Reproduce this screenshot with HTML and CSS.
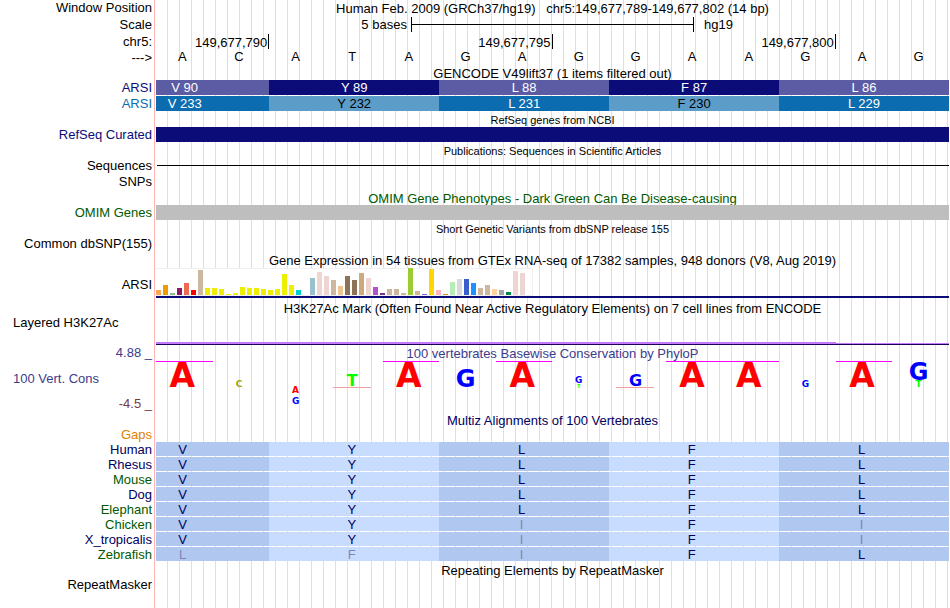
FILE: index.html
```html
<!DOCTYPE html>
<html lang="en">
<head>
    <meta charset="UTF-8">
    <meta name="viewport" content="width=device-width, initial-scale=1.0">
    <title>Human chr5:149,677,789-149,677,802</title>
    <link rel="stylesheet" href="styles.css">
</head>
<body>
<main class="browser">
    <!-- ruler -->
    <section class="ruler">
        <div class="row">
            <div class="label">Window Position</div>
            <h1 class="title">Human Feb. 2009 (GRCh37/hg19) &nbsp; chr5:149,677,789-149,677,802 (14 bp)</h1>
        </div>
        <div class="row tall">
            <div class="label">Scale</div>
            <div class="scale">
                <span class="scale-text">5 bases</span>
                <span class="scale-bar"></span>
                <span class="scale-name">hg19</span>
            </div>
        </div>
        <div class="row tall">
            <div class="label">chr5:</div>
            <div class="bases">
                <span class="tick first">149,677,790</span>
                <span class="tick">149,677,795</span>
                <span class="tick">149,677,800</span>
            </div>
        </div>
        <div class="row">
            <div class="label">---&gt;</div>
            <div class="bases" id="bases"></div>
        </div>
    </section>

    <section class="gencode">
        <h2 class="title tight">GENCODE V49lift37 (1 items filtered out)</h2>
        <div class="row">
            <div class="label navy">ARSI</div>
            <div class="codons">
                <span>V 90</span><span>Y 89</span><span>L 88</span><span>F 87</span><span>L 86</span>
            </div>
        </div>
        <div class="row">
            <div class="label blue">ARSI</div>
            <div class="codons alt">
                <span>V 233</span><span>Y 232</span><span>L 231</span><span>F 230</span><span>L 229</span>
            </div>
        </div>
    </section>

    <section class="refseq">
        <h2 class="title small">RefSeq genes from NCBI</h2>
        <div class="row">
            <div class="label navy">RefSeq Curated</div>
            <div class="bar"></div>
        </div>
    </section>

    <section class="publications">
        <h2 class="title small">Publications: Sequences in Scientific Articles</h2>
        <div class="row">
            <div class="label">Sequences</div>
            <div class="thin-line"></div>
        </div>
        <div class="row">
            <div class="label">SNPs</div>
        </div>
    </section>

    <section class="omim">
        <h2 class="title green">OMIM Gene Phenotypes - Dark Green Can Be Disease-causing</h2>
        <div class="row">
            <div class="label green">OMIM Genes</div>
            <div class="bar gray"></div>
        </div>
    </section>

    <section class="dbsnp">
        <h2 class="title small">Short Genetic Variants from dbSNP release 155</h2>
        <div class="row">
            <div class="label">Common dbSNP(155)</div>
        </div>
    </section>

    <section class="gtex">
        <h2 class="title">Gene Expression in 54 tissues from GTEx RNA-seq of 17382 samples, 948 donors (V8, Aug 2019)</h2>
        <div class="row">
            <div class="label">ARSI</div>
            <div class="gene">
                <div class="tissues" id="tissues"></div>
            </div>
        </div>
    </section>

    <section class="h3k27ac">
        <h2 class="title">H3K27Ac Mark (Often Found Near Active Regulatory Elements) on 7 cell lines from ENCODE</h2>
        <div class="row">
            <div class="label left">Layered H3K27Ac</div>
            <div class="signal bases">
                <span class="signal-high"></span>
                <span class="signal-low"></span>
            </div>
        </div>
    </section>

    <section class="phylop">
        <div class="row">
            <div class="label violet">4.88 _</div>
            <h2 class="title violet">100 vertebrates Basewise Conservation by PhyloP</h2>
        </div>
        <div class="row">
            <div class="axis">
                <div class="label left violet">100 Vert. Cons</div>
                <div class="label brown">-4.5 _</div>
            </div>
            <div class="bases logo">
                <div class="over"><b class="a high">A</b></div>
                <div><b class="c tiny">C</b></div>
                <div class="below"><b class="a tiny">A</b><b class="g tiny">G</b></div>
                <div class="under"><b class="t low">T</b></div>
                <div class="over"><b class="a high">A</b></div>
                <div><b class="g mid">G</b></div>
                <div class="over"><b class="a high">A</b></div>
                <div><b class="g tiny">G</b><b class="t dot">T</b></div>
                <div class="under"><b class="g low">G</b></div>
                <div class="over"><b class="a high">A</b></div>
                <div class="over"><b class="a high">A</b></div>
                <div><b class="g tiny">G</b></div>
                <div class="over"><b class="a high">A</b></div>
                <div><b class="g mid">G</b><b class="t tiny">T</b></div>
            </div>
        </div>
    </section>

    <section class="multiz">
        <h2 class="title dark">Multiz Alignments of 100 Vertebrates</h2>
        <div class="row">
            <div class="label orange">Gaps</div>
        </div>
        <table class="alignment">
            <tbody id="species"></tbody>
        </table>
    </section>

    <section class="repeats">
        <h2 class="title">Repeating Elements by RepeatMasker</h2>
        <div class="row">
            <div class="label">RepeatMasker</div>
        </div>
    </section>
</main>
<script src="tracks.js"></script>
</body>
</html>
```

FILE: styles.css
```css
* {
    box-sizing: border-box;
}

body {
    margin: 0;
    background: #fff;
    color: #000;
    font-family: "Liberation Sans", Arial, sans-serif;
    font-size: 13px;
}

/* label column and the red line first, guide lines every 12px behind the tracks */
.browser {
    min-height: 100vh;
    margin-right: 1px;
    background:
        linear-gradient(to right, #fff 154px, #ffb4b4 154px, #ffb4b4 155px, #fff 155px, #fff 156px, transparent 156px),
        repeating-linear-gradient(to right, transparent 0, transparent 11px, #dcdcf5 11px, #dcdcf5 12px);
}

.row {
    display: grid;
    grid-template-columns: 152px 1fr;
    column-gap: 4px;
    min-height: 16px;
    line-height: 16px;
}

.row.tall {
    min-height: 17px;
    line-height: 17px;
}

.label {
    text-align: right;
    white-space: nowrap;
}

.label.left {
    padding-left: 13px;
    text-align: left;
}

.title {
    margin: 0;
    padding: 2px 0 0 156px;
    font-size: 13px;
    font-weight: normal;
    line-height: 13px;
    text-align: center;
    white-space: nowrap;
}

.title.tight {
    line-height: 12px;
}

.title.small {
    font-size: 11px;
}

.row .title {
    padding-left: 0;
    line-height: 14px;
}

.navy {
    color: #0c0c78;
}

.blue {
    color: #0c6cb0;
}

.green {
    color: #005a00;
}

.violet {
    color: #3c3c8c;
}

.brown {
    color: #783c3c;
}

.orange {
    color: #e08200;
}

.dark {
    color: #000060;
}

/* ruler */
.bases {
    display: grid;
    grid-template-columns: repeat(14, 1fr);
}

#bases span {
    padding-right: 4px;
    line-height: 13px;
    text-align: center;
}

.scale {
    display: grid;
    grid-template-columns: 9fr 10fr 9fr;
}

.scale-text {
    padding-right: 4px;
    text-align: right;
}

.scale-bar {
    height: 15px;
    margin-top: 1px;
    border: solid #000;
    border-width: 0 1px;
    background: linear-gradient(#000, #000) center / 100% 1px no-repeat;
}

.scale-name {
    padding-left: 10px;
}

.tick {
    grid-column: span 5;
    height: 15px;
    margin-top: 1px;
    padding-right: 1px;
    border-right: 1px solid #000;
    text-align: right;
}

.tick.first {
    grid-column: span 2;
}

/* codons */
.codons {
    display: grid;
    grid-template-columns: 2fr 3fr 3fr 3fr 3fr;
    height: 15px;
    line-height: 15px;
    text-align: center;
}

.codons span {
    background: #5c5ca4;
    color: #fff;
}

.codons span:nth-child(even) {
    background: #0c0c78;
}

.codons.alt span {
    background: #0c6cb0;
}

.codons.alt span:nth-child(even) {
    background: #5c9cc8;
    color: #000;
}

/* the first codon is cut by the window edge */
.codons span:first-child {
    padding-right: 56px;
}

.bar {
    height: 15px;
    background: #0c0c78;
}

.bar.gray {
    background: #bebebe;
}

.thin-line {
    height: 8px;
    margin-left: 1px;
    border-bottom: 1px solid #000;
}

/* expression */
.gtex .row {
    height: 33px;
    line-height: 35px;
}

.gene {
    height: 31px;
    border-bottom: 2px solid #0c0c78;
}

.tissues {
    display: inline-flex;
    align-items: flex-end;
    gap: 2px;
    height: 28px;
    margin-top: 1px;
    border: solid #f0f0f0;
    border-width: 1px 1px 1px 0;
    background: #fff;
    vertical-align: top;
}

.tissues span {
    width: 5px;
}

/* histone marks */
.h3k27ac .row {
    height: 30px;
    line-height: 15px;
}

.signal {
    align-self: end;
    align-items: end;
    border-bottom: 1px solid #1c0058;
}

.signal-high {
    grid-column: span 12;
    height: 2px;
    background: #c878ff;
}

.signal-low {
    grid-column: span 2;
    height: 1px;
    background: #c878ff;
}

/* conservation */
.axis {
    display: flex;
    flex-direction: column;
    justify-content: space-between;
    height: 51px;
    padding-top: 10px;
}

.logo {
    font-family: "DejaVu Sans", sans-serif;
}

.logo div {
    display: flex;
    flex-direction: column;
    align-items: center;
    justify-content: flex-end;
    height: 27px;
    padding-right: 4px;
    border-top: 1px solid transparent;
}

.logo .over {
    border-color: #f0f;
}

.logo .below {
    height: 46px;
}

.logo .under::after {
    width: 38px;
    height: 1px;
    background: #f0a0a0;
    content: "";
}

.high {
    font-size: 33px;
    line-height: 24px;
}

.mid {
    font-size: 24px;
    line-height: 18px;
}

.low {
    font-size: 16px;
    line-height: 12px;
}

.tiny {
    font-size: 9px;
    line-height: 7px;
}

.below .tiny {
    line-height: 11px;
}

.dot {
    font-size: 5px;
    line-height: 4px;
}

.a {
    color: #f00;
}

.c {
    color: #a0a000;
}

.g {
    color: #00f;
}

.t {
    color: #0f0;
}

/* alignment */
.multiz .row {
    min-height: 15px;
    line-height: 15px;
}

.alignment,
.alignment tbody {
    display: block;
}

.alignment tr {
    display: grid;
    grid-template-columns: 156px 2fr 3fr 3fr 3fr 3fr;
    height: 15px;
    line-height: 15px;
}

.alignment th {
    padding: 0 4px 0 0;
    font-weight: normal;
    text-align: right;
}

.alignment td {
    height: 14px;
    padding: 0 5px 0 0;
    background: #c8dcff;
    color: #000060;
    text-align: center;
}

.alignment td:nth-child(even) {
    background: #b0c8f0;
}

.alignment td:nth-child(2) {
    padding-right: 60px;
}

.alignment td.differs {
    color: #8484b4;
}

.repeats .row {
    line-height: 15px;
}
```

FILE: tracks.js
```js
const sequence = 'ACATAGAGGAAGAG';

// [color, height in px] for every tissue
const tissues = [
    ['#ffa54f', 5], ['#ee9a00', 10], ['#8fbc8f', 2], ['#8b1c62', 7], ['#ee6a50', 12], ['#ff0000', 5],
    ['#cdb79e', 25], ['#eeee00', 7], ['#eeee00', 7], ['#eeee00', 6], ['#eeee00', 1], ['#eeee00', 2],
    ['#eeee00', 8], ['#eeee00', 7], ['#eeee00', 7], ['#eeee00', 6], ['#eeee00', 5], ['#eeee00', 6],
    ['#eeee00', 21], ['#eeee00', 10], ['#00cdcd', 5], ['#ee82ee', 0], ['#9ac0cd', 17], ['#eed5d2', 23],
    ['#eed5d2', 19], ['#cdb79e', 15], ['#eec591', 9], ['#8b7355', 19], ['#8b7355', 15], ['#cdaa7d', 22],
    ['#eed5d2', 17], ['#b452cd', 8], ['#7a378b', 2], ['#cdb79e', 6], ['#cdb79e', 6], ['#cdb79e', 2],
    ['#9acd32', 27], ['#cdb79e', 4], ['#7a67ee', 1], ['#ffd700', 26], ['#ffb6c1', 5], ['#cd9b1d', 1],
    ['#b4eeb4', 13], ['#d9d9d9', 16], ['#3a5fcd', 16], ['#1e90ff', 12], ['#cdb79e', 7], ['#cdb79e', 10],
    ['#ffd39b', 6], ['#a6a6a6', 5], ['#008b45', 3], ['#eed5d2', 24], ['#eed5d2', 22], ['#ff00ff', 0]
];

// lower case marks an amino acid that differs from human
const species = [
    ['Human', 'dark', 'VYLFL'],
    ['Rhesus', 'dark', 'VYLFL'],
    ['Mouse', 'green', 'VYLFL'],
    ['Dog', 'dark', 'VYLFL'],
    ['Elephant', 'green', 'VYLFL'],
    ['Chicken', 'green', 'VYiFi'],
    ['X_tropicalis', 'dark', 'VYiFi'],
    ['Zebrafish', 'green', 'lfiFL']
];

document.getElementById('bases').innerHTML = [...sequence].map(b => `<span>${b}</span>`).join('');

document.getElementById('tissues').innerHTML = tissues
    .map(([color, height]) => `<span style="height: ${height}px; background: ${color}"></span>`)
    .join('');

document.getElementById('species').innerHTML = species.map(([name, color, acids]) => {
    const cells = [...acids].map(a => {
        const upper = a.toUpperCase();
        return `<td class="${a === upper ? '' : 'differs'}">${upper}</td>`;
    }).join('');
    return `<tr><th scope="row" class="${color}">${name}</th>${cells}</tr>`;
}).join('');
```
